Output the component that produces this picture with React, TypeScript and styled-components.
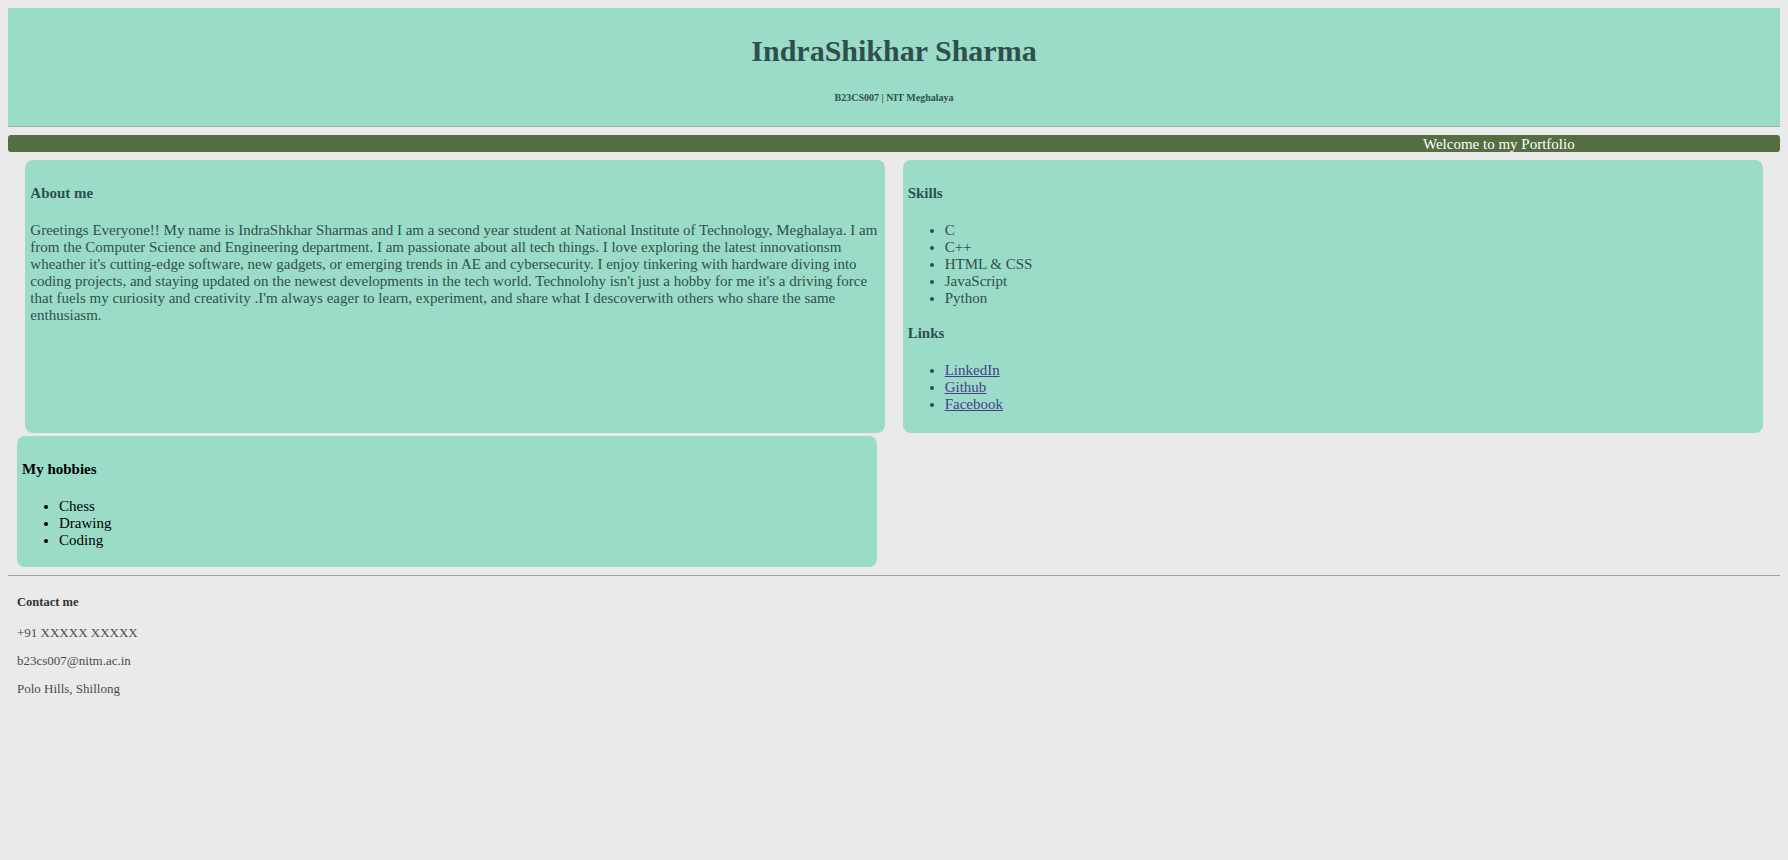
import { FC } from 'react';
import { styled, createGlobalStyle } from 'styled-components';

const GlobalStyle = createGlobalStyle`
  body {
    margin: 8px;
    background: #eaeaea;
    font-family: 'Liberation Serif', 'Times New Roman', serif;
    font-size: 15px;
    line-height: 17px;
  }
`;

const skills = ['C', 'C++', 'HTML & CSS', 'JavaScript', 'Python'];
const links = ['LinkedIn', 'Github', 'Facebook'];
const hobbies = ['Chess', 'Drawing', 'Coding'];

const App: FC = () => {
  return (
    <>
      <GlobalStyle />
      <Header>
        <Title>IndraShikhar Sharma</Title>
        <SubTitle>B23CS007 | NIT Meghalaya</SubTitle>
      </Header>
      <Banner>Welcome to my Portfolio</Banner>
      <CardRow>
        <Card $color="#2f4f4f">
          <CardHeading>About me</CardHeading>
          <CardText>
            Greetings Everyone!! My name is IndraShkhar Sharmas and I am a second year student at
            National Institute of Technology, Meghalaya. I am from the Computer Science and
            Engineering department. I am passionate about all tech things. I love exploring the
            latest innovationsm wheather it's cutting-edge software, new gadgets, or emerging trends
            in AE and cybersecurity. I enjoy tinkering with hardware diving into coding projects, and
            staying updated on the newest developments in the tech world. Technolohy isn't just a
            hobby for me it's a driving force that fuels my curiosity and creativity .I'm always eager
            to learn, experiment, and share what I descoverwith others who share the same enthusiasm.
          </CardText>
        </Card>
        <Card $color="#2f4f4f">
          <CardHeading>Skills</CardHeading>
          <List>
            {skills.map((s) => (
              <li key={s}>{s}</li>
            ))}
          </List>
          <CardHeading $top={18}>Links</CardHeading>
          <List>
            {links.map((l) => (
              <li key={l}>
                <LinkItem href="#">{l}</LinkItem>
              </li>
            ))}
          </List>
        </Card>
      </CardRow>
      <HobbyCard $color="#000">
        <CardHeading>My hobbies</CardHeading>
        <List>
          {hobbies.map((h) => (
            <li key={h}>{h}</li>
          ))}
        </List>
      </HobbyCard>
      <Divider />
      <Footer>
        <FooterHeading>Contact me</FooterHeading>
        <FooterText>+91 XXXXX XXXXX</FooterText>
        <FooterText>b23cs007@nitm.ac.in</FooterText>
        <FooterText>Polo Hills, Shillong</FooterText>
      </Footer>
    </>
  );
};

export default App;

const Header = styled.header`
  background: #9bdcc8;
  color: #2f4f4f;
  text-align: center;
  padding-top: 6px;
  border-bottom: 1px solid #a3aba6;
  overflow: hidden;
`;

const Title = styled.h1`
  font-size: 30px;
  line-height: 34px;
  margin: 20px 0 24px;
`;

const SubTitle = styled.h6`
  font-size: 10px;
  line-height: 12px;
  margin: 0 0 22px;
`;

const Banner = styled.div`
  margin-top: 8px;
  height: 17px;
  background: #546e42;
  border-radius: 3px;
  color: #fff;
  font-size: 15px;
  line-height: 19px;
  padding-left: 1415px;
  white-space: nowrap;
  overflow: hidden;
`;

const CardRow = styled.section`
  margin-top: 8px;
  display: flex;
  justify-content: space-evenly;
`;

const Card = styled.div<{ $color: string }>`
  width: 860px;
  box-sizing: border-box;
  padding: 5px;
  background: #9bdcc8;
  border-radius: 8px;
  color: ${(p) => p.$color};
`;

const HobbyCard = styled(Card)`
  margin: 3px 0 0 9px;
  padding: 5px 5px 3px;
`;

const CardHeading = styled.h4<{ $top?: number }>`
  font-size: 15px;
  line-height: 17px;
  margin: ${(p) => p.$top ?? 20}px 0 20px;
`;

const CardText = styled.p`
  margin: 15px 0;
`;

const List = styled.ul`
  margin: 15px 0;
  padding-left: 37px;
`;

const LinkItem = styled.a`
  color: #483d8b;
`;

const Divider = styled.hr`
  margin: 8px 0 0;
  border: none;
  border-top: 1px solid #a0a0a0;
`;

const Footer = styled.footer`
  padding: 0 9px;
  color: #4a4a4a;
`;

const FooterHeading = styled.h5`
  font-size: 12.5px;
  line-height: 14px;
  margin: 19px 0 16px;
  color: #333;
`;

const FooterText = styled.p`
  font-size: 13px;
  line-height: 15px;
  margin: 13px 0;
`;
